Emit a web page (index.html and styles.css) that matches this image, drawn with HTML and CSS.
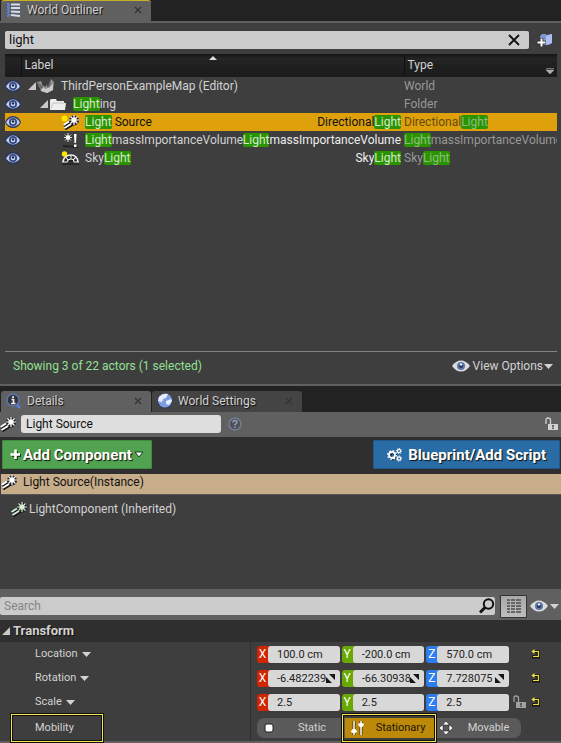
FILE: index.html
```html
<!DOCTYPE html>
<html lang="en">
<head>
<meta charset="utf-8">
<meta name="viewport" content="width=device-width, initial-scale=1">
<title>World Outliner</title>
<link rel="stylesheet" href="styles.css">
</head>
<body>
<svg class="sprite" aria-hidden="true">
  <symbol id="eye" viewBox="0 0 16 12">
    <path d="M0 6.500Q2 0 8 0Q14 0 16 6.500Q13 12 8 12Q3 12 0 6.500Z" fill="#28365f"/>
    <path d="M1 6.500Q4 1.500 8 1.500Q12 1.500 15 6.500Q12 10.500 8 10.500Q4 10.500 1 6.500Z" fill="#c3cdf0"/>
    <circle cx="8" cy="6" r="4" fill="#34497f"/>
    <circle cx="8" cy="6" r="2.200" fill="#dbe4ff"/>
    <circle cx="8" cy="5.500" r="1.200" fill="#101c40"/>
  </symbol>
  <symbol id="eye-light" viewBox="0 0 18 12">
    <path d="M0 6Q4 .5 9 .5Q14 .5 18 6Q14 11.500 9 11.500Q4 11.500 0 6Z" fill="#dcdcdc"/>
    <circle cx="9" cy="6" r="4" fill="#5b76a6"/>
    <circle cx="9" cy="6" r="2" fill="#20304e"/>
    <circle cx="9" cy="4.500" r="1.300" fill="#dfe8f8"/>
  </symbol>
  <symbol id="wand" viewBox="0 0 16 15">
    <path d="M1 11L7 7M2 14L10 9" stroke="#161616" stroke-width="3"/>
    <circle cx="11" cy="5.500" r="5" fill="#222"/>
    <path d="M.5 10L6 6.500M1.500 13L8 9" stroke="currentColor" stroke-width="2"/>
    <path d="M11 0V10M6 5H16M7.500 1.500L14.500 8.500M14.500 1.500L7.500 8.500" stroke="currentColor" stroke-width="1.200"/>
    <circle cx="11" cy="5" r="2.600" fill="currentColor"/>
  </symbol>
  <symbol id="lock" viewBox="0 0 13 14">
    <path d="M1 7V3Q1 1 3 1Q5.500 1 5.500 3V7" fill="none" stroke="currentColor" stroke-width="1.300"/>
    <rect x="3" y="7" width="10" height="6" fill="currentColor"/>
    <path d="M8 8V10.500M8 11V12" stroke="#444" stroke-width="1.500"/>
  </symbol>
  <symbol id="reset" viewBox="0 0 11 10">
    <path d="M4 3H8.500V8H2" fill="none" stroke="#17170c" stroke-width="3"/>
    <path d="M4 2.500H8.500V7.500H3" fill="none" stroke="#e8df3e" stroke-width="1.200"/>
    <path d="M1.500 2.500L4.500 0V5Z" fill="#f0e74a"/>
  </symbol>
  <symbol id="caret" viewBox="0 0 9 5"><path d="M0 0H9L4.500 5Z" fill="currentColor"/></symbol>
  <symbol id="twisty" viewBox="0 0 8 8"><path d="M8 0V8H0Z" fill="currentColor"/></symbol>
  <symbol id="close" viewBox="0 0 8 8"><path d="M1 1L7 7M7 1L1 7" stroke="currentColor" stroke-width="1.300"/></symbol>
  <symbol id="drag" viewBox="0 0 9 9"><path d="M3 0H9V6ZM0 3V9H6Z" fill="#151515"/></symbol>
</svg>

<section class="panel outliner">
  <div class="tab-bar">
    <div class="tab tab-active tab-focused">
      <svg class="tab-icon" viewBox="0 0 16 16"><path d="M2 1V15M2 3H5M2 6H5M2 9H5M2 13H5" stroke="#5d83cc" stroke-width="2" stroke-dasharray="2 1"/><path d="M5 2.500H14M5 6H14M5 9.500L14 10M5 13L14 14" stroke="#d4def2" stroke-width="2"/></svg>
      <span class="tab-title">World Outliner</span>
      <button class="tab-close" aria-label="Close World Outliner"><svg><use href="#close"/></svg></button>
    </div>
  </div>
  <div class="outliner-body">
    <div class="outliner-search">
      <label class="search-field">
        <input type="text" value="light" aria-label="Search actors">
        <button class="clear" aria-label="Clear search"><svg viewBox="0 0 12 12"><path d="M1 1L11 11M11 1L1 11" stroke="#111" stroke-width="1.800"/></svg></button>
      </label>
      <button class="new-folder" aria-label="Create folder"><svg viewBox="0 0 16 14"><path d="M3 3L5 1H9V2L15 1V10L12 12H4Z" fill="#8196cf"/><path d="M9 3L15 1V10L9 12Z" fill="#adbef0"/><path d="M4.500 5V14M0 9.500H9" stroke="#2a2a2a" stroke-width="3.500"/><path d="M4.500 5.500V13.500M.5 9.500H8.500" stroke="#fff" stroke-width="2"/></svg></button>
    </div>
    <table class="actors">
      <colgroup><col class="col-eye"><col><col class="col-type"></colgroup>
      <thead>
        <tr>
          <th aria-label="Visibility"></th>
          <th class="sorted">Label<svg class="sort-mark" viewBox="0 0 8 4"><path d="M0 4L4 0L8 4Z" fill="#ddd"/></svg></th>
          <th><span class="type-head">Type<svg viewBox="0 0 8 6"><path d="M0 .5H8M0 2H8L4 6Z" fill="#aaa" stroke="#aaa" stroke-width=".6"/></svg></span></th>
        </tr>
      </thead>
      <tbody>
        <tr>
          <td><svg class="eye"><use href="#eye"/></svg></td>
          <td><div class="actor depth-0"><svg class="twisty"><use href="#twisty"/></svg><svg class="actor-icon" viewBox="0 0 18 15"><path d="M0 3L4 2L6 7L8 4L11 8L14 0L17 3L16 11L10 14L4 12Z" fill="#929292"/><path d="M4 8L9 10L16 5L16 11L10 14L4 12Z" fill="#cacaca"/><path d="M1 3L6 8L4 11ZM10 9L14 1L13 8Z" fill="#666"/><path d="M6 0L9 3L9 8L5 6ZM10 0H13L11 6Z" fill="#3e3e3e"/></svg><span class="name">ThirdPersonExampleMap (Editor)</span></div></td>
          <td class="type">World</td>
        </tr>
        <tr>
          <td><svg class="eye"><use href="#eye"/></svg></td>
          <td><div class="actor depth-1"><svg class="twisty"><use href="#twisty"/></svg><svg class="actor-icon" viewBox="0 0 18 15"><path d="M1 13V3L2 2H7L8 4H15V6H17L16 13Z" fill="#eee"/><path d="M2 12L4 6H16" fill="none" stroke="#aaa" stroke-width=".6"/></svg><span class="name"><mark>Light</mark>ing</span></div></td>
          <td class="type">Folder</td>
        </tr>
        <tr class="selected">
          <td><svg class="eye"><use href="#eye"/></svg></td>
          <td><div class="actor depth-2"><svg class="actor-icon" viewBox="0 0 18 15"><use href="#wand" x="2" y="0" width="16" height="15"/><circle cx="3.500" cy="3.500" r="3" fill="#ffe500"/></svg><span class="name"><mark>Light</mark> Source</span><span class="class-name">Directional<mark>Light</mark></span></div></td>
          <td class="type">Directional<mark>Light</mark></td>
        </tr>
        <tr>
          <td><svg class="eye"><use href="#eye"/></svg></td>
          <td><div class="actor depth-2"><svg class="actor-icon" viewBox="0 0 18 15"><path d="M2 13L17 14" stroke="#222" stroke-width="2"/><path d="M7 0V9M3 4.500H11M4 1.500L10 7.500M10 1.500L4 7.500" stroke="#ddd"/><circle cx="7" cy="4.500" r="2.200" fill="#fff"/><path d="M13 1H15.500L15 10H13.500ZM13 11.500H15.500V14H13Z" fill="#fff"/></svg><span class="name"><mark>Light</mark>massImportanceVolume</span><span class="class-name"><mark>Light</mark>massImportanceVolume</span></div></td>
          <td class="type"><mark>Light</mark>massImportanceVolume</td>
        </tr>
        <tr>
          <td><svg class="eye"><use href="#eye"/></svg></td>
          <td><div class="actor depth-2"><svg class="actor-icon" viewBox="0 0 18 15"><path d="M2 11Q3 4 10 4Q16 4 17 11" fill="#222" stroke="#eee" stroke-width="1.600"/><path d="M6 11Q7 8 10 8Q13 8 13 11M10 4V8M5 6L7 9M15 6L12 9M1 11H6M13 11H18" fill="none" stroke="#eee" stroke-width="1.100"/><path d="M1 13H18" stroke="#222" stroke-width="1.500"/><circle cx="3.500" cy="3" r="2.700" fill="#ffe500"/></svg><span class="name">Sky<mark>Light</mark></span><span class="class-name">Sky<mark>Light</mark></span></div></td>
          <td class="type">Sky<mark>Light</mark></td>
        </tr>
      </tbody>
    </table>
    <div class="status">
      <span class="count">Showing 3 of 22 actors (1 selected)</span>
      <button class="view-options"><svg class="eye-light"><use href="#eye-light"/></svg>View Options<svg class="caret"><use href="#caret"/></svg></button>
    </div>
  </div>
</section>

<section class="panel details">
  <div class="tab-bar details-tabs">
    <div class="tab tab-active">
      <svg class="tab-icon" viewBox="0 0 16 16"><path d="M10 11L14 15" stroke="#4f7fdc" stroke-width="2.500"/><circle cx="7" cy="7" r="6" fill="#30343c" stroke="#5d77ad" stroke-width="1.500"/><path d="M7 3V5M5.500 6.500H7.500V10.500M5 10.500H9.500" fill="none" stroke="#eee" stroke-width="1.700"/></svg>
      <span class="tab-title">Details</span>
      <button class="tab-close" aria-label="Close Details"><svg><use href="#close"/></svg></button>
    </div>
    <div class="tab">
      <svg class="tab-icon" viewBox="0 0 16 16"><circle cx="8" cy="8.500" r="7.500" fill="#333d5e"/><circle cx="8" cy="7.500" r="7" fill="#7d9dde"/><path d="M2 4Q6 0 11 1L9 5L6 6L5 9L1 8ZM9 8L14 6L15 8L12 12L9 11Z" fill="#e5eeff"/></svg>
      <span class="tab-title">World Settings</span>
      <button class="tab-close" aria-label="Close World Settings"><svg><use href="#close"/></svg></button>
    </div>
  </div>
  <div class="name-bar">
    <svg class="wand"><use href="#wand"/></svg>
    <input type="text" value="Light Source" aria-label="Actor name">
    <button class="help" aria-label="Help"><svg viewBox="0 0 14 14"><circle cx="7" cy="7" r="6" fill="#4e525b" stroke="#747e95" stroke-width="1.500"/><path d="M5 5.500Q5 3.500 7 3.500Q9 3.500 9 5.300Q9 6.300 7 7.500V8.500M7 9.500V11" fill="none" stroke="#9aa1b2" stroke-width="1.400"/></svg></button>
    <button class="lock" aria-label="Lock details"><svg><use href="#lock"/></svg></button>
  </div>
  <div class="actions">
    <button class="add-component"><svg class="plus" viewBox="0 0 11 11"><path d="M6.500 2V11M2 6.500H11" stroke="#1c3d1c" stroke-width="3"/><path d="M5.500 .5V10M.5 5.500H10" stroke="#fff" stroke-width="2.600"/></svg>Add Component<svg class="caret-outline" viewBox="0 0 10 7"><path d="M1 1H9L5 6Z" fill="#fff" stroke="#1c3d1c"/></svg></button>
    <button class="blueprint"><svg class="gears" viewBox="0 0 15 14"><g fill="none" stroke="#0d2d4a"><circle cx="6" cy="8" r="3" stroke-width="2.500"/></g><g fill="none" stroke="#fff"><circle cx="5" cy="7" r="3" stroke-width="1.800"/><circle cx="5" cy="7" r="4.400" stroke-width="1.200" stroke-dasharray="1.700 1.750"/><circle cx="12" cy="3" r="1.600" stroke-width="1.200"/><circle cx="12" cy="10.500" r="1.600" stroke-width="1.200"/><circle cx="12" cy="3" r="2.600" stroke-dasharray="1 1"/><circle cx="12" cy="10.500" r="2.600" stroke-dasharray="1 1"/></g></svg>Blueprint/Add Script</button>
  </div>
  <ul class="components">
    <li class="component component-root"><svg class="wand"><use href="#wand"/></svg>Light Source(Instance)</li>
    <li class="component component-child"><svg class="wand"><use href="#wand"/></svg>LightComponent (Inherited)</li>
  </ul>
  <div class="details-search">
    <label class="search-field">
      <input type="text" placeholder="Search" aria-label="Search details">
      <svg class="magnifier" viewBox="0 0 16 16"><circle cx="9.500" cy="6" r="4.700" fill="none" stroke="#111" stroke-width="2"/><path d="M6 9.500L1 14.500" stroke="#111" stroke-width="3"/></svg>
    </label>
    <button class="matrix" aria-label="Property matrix"><svg viewBox="0 0 14 14"><path d="M0 1H3M4 1H8M9 1H14M0 4H3M4 4H8M9 4H14M0 7H3M4 7H8M9 7H14M0 10H3M4 10H8M9 10H14M0 13H3M4 13H8M9 13H14" stroke="#666" stroke-width="1.800"/></svg></button>
    <button class="display-options" aria-label="Display options"><svg class="eye-light"><use href="#eye-light"/></svg><svg class="caret"><use href="#caret"/></svg></button>
  </div>
  <div class="category">
    <h2><svg class="twisty"><use href="#twisty"/></svg>Transform</h2>
    <div class="property">
      <div class="property-name"><button>Location<svg class="caret"><use href="#caret"/></svg></button></div>
      <div class="property-value">
        <div class="vector">
          <label class="axis axis-x"><span>X</span><input type="text" value="100.0 cm"></label>
          <label class="axis axis-y"><span>Y</span><input type="text" value="-200.0 cm"></label>
          <label class="axis axis-z"><span>Z</span><input type="text" value="570.0 cm"></label>
        </div>
        <span class="lock-slot"></span>
        <button class="reset" aria-label="Reset location"><svg><use href="#reset"/></svg></button>
      </div>
    </div>
    <div class="property">
      <div class="property-name"><button>Rotation<svg class="caret"><use href="#caret"/></svg></button></div>
      <div class="property-value">
        <div class="vector">
          <label class="axis axis-x"><span>X</span><input type="text" value="-6.482239"><i><svg><use href="#drag"/></svg></i></label>
          <label class="axis axis-y"><span>Y</span><input type="text" value="-66.30938"><i><svg><use href="#drag"/></svg></i></label>
          <label class="axis axis-z"><span>Z</span><input type="text" value="7.728075"><i><svg><use href="#drag"/></svg></i></label>
        </div>
        <span class="lock-slot"></span>
        <button class="reset" aria-label="Reset rotation"><svg><use href="#reset"/></svg></button>
      </div>
    </div>
    <div class="property">
      <div class="property-name"><button>Scale<svg class="caret"><use href="#caret"/></svg></button></div>
      <div class="property-value">
        <div class="vector">
          <label class="axis axis-x"><span>X</span><input type="text" value="2.5"></label>
          <label class="axis axis-y"><span>Y</span><input type="text" value="2.5"></label>
          <label class="axis axis-z"><span>Z</span><input type="text" value="2.5"></label>
        </div>
        <button class="lock-slot" aria-label="Lock scale ratio"><svg><use href="#lock"/></svg></button>
        <button class="reset" aria-label="Reset scale"><svg><use href="#reset"/></svg></button>
      </div>
    </div>
    <div class="property property-mobility">
      <div class="property-name"><span class="framed">Mobility</span></div>
      <div class="property-value">
        <div class="segments" role="radiogroup" aria-label="Mobility">
          <label class="segment"><input type="radio" name="mobility"><svg viewBox="0 0 16 16"><rect x="4" y="4" width="8" height="8" rx="2" fill="#fff" stroke="#222"/></svg><span>Static</span></label>
          <label class="segment segment-on"><input type="radio" name="mobility" checked><svg viewBox="0 0 16 16"><path d="M5 1V15M12 1V15" stroke="#4b3504" stroke-width="3"/><path d="M5 1V15M12 1V15M9 4.500H15M2 11.500H8" stroke="#fff" stroke-width="1.500"/><circle cx="5" cy="11" r="2.300" fill="#fff"/><circle cx="12" cy="5" r="2.300" fill="#fff"/></svg><span>Stationary</span></label>
          <label class="segment"><input type="radio" name="mobility"><svg viewBox="0 0 16 16"><path d="M8 1L11.500 5H4.500ZM8 15L4.500 11H11.500ZM1 8L5 4.500V11.500ZM15 8L11 11.500V4.500Z" fill="#fff" stroke="#222" stroke-width=".6"/></svg><span>Movable</span></label>
        </div>
      </div>
    </div>
  </div>
</section>
</body>
</html>
```

FILE: styles.css
```css
* { box-sizing: border-box; }

body {
  margin: 0;
  background: #606060;
  color: #d2d2d2;
  font: 12px/18px Roboto, "Liberation Sans", sans-serif;
}

button, input { font: inherit; color: inherit; margin: 0; padding: 0; border: 0; background: none; }
button { display: inline-flex; align-items: center; white-space: nowrap; }
input { min-width: 0; outline: 0; }
svg { display: block; flex: none; }
.sprite { display: none; }

/* Tabs */
.tab-bar { display: flex; gap: 1px; height: 21px; padding-left: 1px; background: #222; }
.details-tabs { height: 26px; padding-top: 5px; }
.tab {
  display: flex;
  align-items: center;
  gap: 5px;
  width: 150px;
  padding: 0 9px 2px 5px;
  background: #444;
  border-radius: 3px 3px 0 0;
  text-shadow: 1px 1px 1px #111;
}
.tab-active { background: #606060; }
.tab-focused { border-top: 1px solid #c5b02a; }
.tab-icon { width: 16px; height: 16px; }
.tab-title { flex: 1; white-space: nowrap; }
.tab-close { color: #333; }
.tab-close svg { width: 8px; height: 8px; }

/* Outliner */
.outliner-body {
  display: flex;
  flex-direction: column;
  min-height: 365px;
  padding: 8px 4px 0 5px;
  background: #3e3e3e;
  border: solid #606060;
  border-width: 2px 0;
}
.outliner-search { display: flex; gap: 8px; align-items: center; padding-right: 4px; }
.search-field {
  display: flex;
  flex: 1;
  align-items: center;
  min-width: 0;
  height: 18px;
  background: #cbcbcb;
  border-radius: 2px;
  color: #111;
}
.search-field input { flex: 1; padding-left: 4px; }
.outliner-search input { font-size: 13px; }
.clear { padding: 0 9px; }
.clear svg { width: 12px; height: 12px; }
.new-folder svg { width: 16px; height: 14px; }

.actors { width: 100%; margin-top: 5px; border-collapse: collapse; table-layout: fixed; }
.col-eye { width: 16px; }
.col-type { width: 153px; }
.actors th {
  height: 23px;
  padding: 0 3px 2px;
  background: linear-gradient(#151515, #242424 20%, #1a1a1a);
  text-align: left;
  font-weight: 400;
}
.actors th + th { border-left: 1px solid #111; }
.sorted { position: relative; }
.sort-mark { position: absolute; top: 2px; left: 49%; width: 8px; height: 4px; }
.type-head { display: flex; justify-content: space-between; align-items: center; }
.type-head svg { width: 8px; height: 6px; align-self: flex-end; }
.actors td { height: 18px; padding: 0; overflow: hidden; white-space: nowrap; }
.eye { width: 16px; height: 12px; }
.actor { display: flex; align-items: center; height: 18px; padding-right: 3px; }
.depth-0 { padding-left: 7px; }
.depth-1 { padding-left: 19px; }
.depth-2 { padding-left: 39px; }
.twisty { width: 8px; height: 8px; color: #c8c8c8; }
.actor-icon { width: 18px; height: 15px; margin-left: 1px; color: #fff; }
.actor .name { flex: 1; min-width: 0; margin-left: 6px; overflow: hidden; }
.class-name { color: #eee; }
.actors .type { color: #989898; }
.actors mark { display: inline-block; height: 14px; background: #299400; border-radius: 2px; color: #d8e8d2; line-height: 14px; }
.actors .type mark { color: #8fbd80; }
.actors .selected { background: #dea00b; color: #111; }
.selected .class-name { color: #111; }
.actors .selected .type { color: #674b0b; }

.status {
  display: flex;
  align-items: center;
  justify-content: space-between;
  height: 33px;
  margin-top: auto;
  padding: 0 4px 4px 8px;
  border-top: 1px solid #858585;
}
.count { color: #93e093; }
.view-options { gap: 1px; }
.eye-light { width: 18px; height: 12px; }
.view-options .eye-light { margin-right: 2px; }
.caret { width: 9px; height: 5px; }

/* Details header */
.name-bar { display: flex; align-items: center; height: 25px; padding: 0 3px 1px 0; }
.wand { width: 16px; height: 15px; color: #fff; }
.name-bar input { width: 200px; height: 18px; margin: 0 7px 0 5px; padding-left: 5px; background: #dedede; border-radius: 3px; color: #111; }
.help svg { width: 14px; height: 14px; }
.lock { margin-left: auto; }
.lock svg, .lock-slot svg { width: 13px; height: 14px; }
.actions { display: flex; justify-content: space-between; height: 37px; padding: 3px 1px 5px 2px; background: #2f2f2f; }
.actions button { border: 1px solid; border-radius: 1px; color: #fff; font-size: 15px; font-weight: 700; text-shadow: 1px 1px 1px #111; }
.actions .add-component { gap: 2px; padding: 0 7px; background: #51a351; border-color: #418c41; }
.plus { width: 11px; height: 11px; }
.caret-outline { width: 10px; height: 7px; }
.actions .blueprint { gap: 6px; padding: 0 13px; background: #2a6ca6; border-color: #22598a; }
.gears { width: 15px; height: 14px; }

.components { min-height: 115px; margin: 0; padding: 0 0 0 1px; background: #3e3e3e; list-style: none; }
.component { display: flex; align-items: center; }
.component-root { gap: 6px; height: 21px; padding-bottom: 4px; background: #c8ad8a; border-bottom: 1px solid #555; color: #111; }
.component-child { gap: 2px; height: 28px; padding-left: 10px; }
.component-child .wand { color: #d5efd5; }

.details-search { display: flex; align-items: center; height: 31px; padding: 3px 2px 0 0; }
.details-search .search-field input::placeholder { color: #858585; opacity: 1; }
.magnifier { width: 16px; height: 16px; }
.matrix { justify-content: center; width: 27px; height: 23px; margin: 0 3px 0 5px; background: linear-gradient(#a9a9a9, #bdbdbd); border: 1px solid #333; border-radius: 1px; }
.matrix svg { width: 14px; height: 14px; }
.display-options { gap: 2px; }

/* Properties */
.category { background: #3e3e3e; border-bottom: 2px solid #606060; font-size: 11px; }
.category h2 { display: flex; align-items: center; gap: 3px; height: 22px; margin: 0; padding-left: 2px; background: #2f2f2f; font-size: 13px; text-shadow: 1px 1px 1px #111; }
.property { display: grid; grid-template-columns: 251fr 310fr; height: 24px; }
.property-name { display: flex; align-items: center; padding-left: 35px; border-right: 1px solid #303030; }
.property-name button { gap: 4px; }
.property-value { display: flex; align-items: center; gap: 4px; min-width: 0; padding: 0 20px 0 6px; }
.vector { display: grid; flex: 1; grid-template-columns: repeat(3, minmax(0, 1fr)); gap: 2px; }
.axis { display: flex; height: 17px; border-radius: 3px; overflow: hidden; line-height: 17px; }
.axis span { width: 11px; color: #fff; font-size: 12px; text-align: center; }
.axis input { flex: 1; padding-left: 9px; background: #d8d8d8; border-radius: 3px 0 0 3px; color: #222; }
.axis i { display: flex; align-items: center; padding-right: 5px; background: #d8d8d8; }
.axis i svg { width: 9px; height: 9px; }
.axis-x { background: #cf2500; }
.axis-y { background: #69a800; }
.axis-z { background: #2b7df0; }
.lock-slot { width: 13px; color: #a0a0a0; }
.reset svg { width: 11px; height: 10px; }

.property-mobility { height: 27px; }
.framed { position: relative; }
.framed::before, .segment-on::before {
  content: "";
  position: absolute;
  border: 1px solid #f3e54f;
  box-shadow: inset 0 0 0 1px #111;
  outline: 1px solid #111;
}
.framed::before { inset: -5px -29px -5px -24px; }
.segments { display: grid; flex: none; grid-template-columns: 88px 89px 87px; height: 20px; background: #5a5a5a; border-radius: 7px; }
.segment { position: relative; display: flex; align-items: center; padding-left: 4px; }
.segment input { position: absolute; opacity: 0; }
.segment svg { width: 16px; height: 16px; }
.segment span { flex: 1; padding-left: 2px; text-align: center; }
.segment-on { background: #bd8908; color: #1c1505; }
.segment-on::before { inset: -4px -2px -4px -3px; }
```
